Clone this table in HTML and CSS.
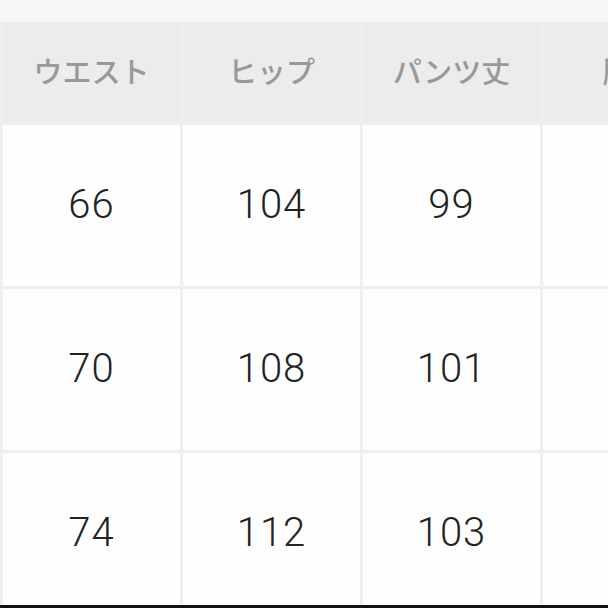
FILE: index.html
```html
<!DOCTYPE html>
<html lang="ja">
<head>
<meta charset="utf-8">
<link rel="stylesheet" href="styles.css">
</head>
<body>
<div class="top"></div>
<div class="sizes">
  <div class="th">ウエスト</div>
  <div class="th">ヒップ</div>
  <div class="th">パンツ丈</div>
  <div class="th">股上</div>

  <div class="td">66</div>
  <div class="td">104</div>
  <div class="td">99</div>
  <div class="td"></div>

  <div class="td">70</div>
  <div class="td">108</div>
  <div class="td">101</div>
  <div class="td"></div>

  <div class="td">74</div>
  <div class="td">112</div>
  <div class="td">103</div>
  <div class="td"></div>
</div>
<div class="edge"></div>
</body>
</html>
```

FILE: styles.css
```css
html, body {
  margin: 0;
  padding: 0;
}
body {
  width: 608px;
  height: 608px;
  overflow: hidden;
  background: #f7f7f7;
  font-family: "Noto Sans CJK JP", sans-serif;
}
.top {
  height: 22px;
}
.sizes {
  display: grid;
  grid-template-columns: repeat(4, 177px);
  grid-template-rows: 100px repeat(3, 161px);
  column-gap: 3px;
  row-gap: 3px;
  padding-left: 3px;
  background: #efefef;
  width: 740px;
}
.th {
  display: flex;
  align-items: center;
  justify-content: center;
  background: #ececec;
  color: #999999;
  font-weight: 500;
  font-size: 29px;
  padding-bottom: 4px;
}
.td {
  display: flex;
  align-items: center;
  justify-content: center;
  background: #fefefe;
  color: #222222;
  font-family: Roboto, "Liberation Sans", sans-serif;
  font-weight: 300;
  font-size: 40px;
  letter-spacing: 1px;
  padding-bottom: 2px;
}
.edge {
  position: fixed;
  left: 0;
  right: 0;
  bottom: 0;
  height: 3px;
  background: #111;
}
```
